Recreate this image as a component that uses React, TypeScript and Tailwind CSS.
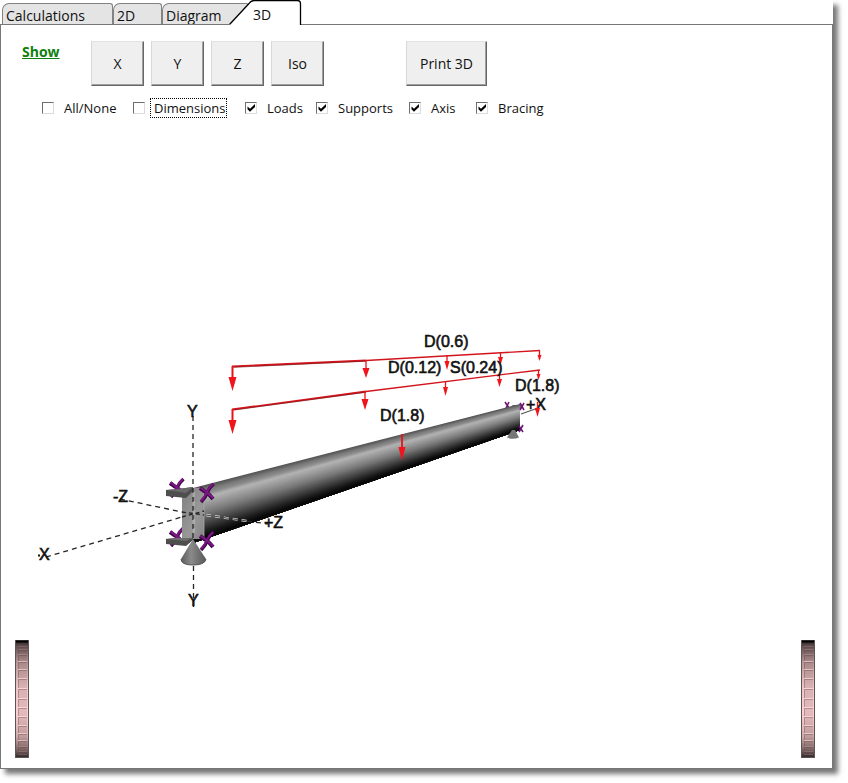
import React from "react";

const ui = "font-['Open_Sans','Noto_Sans',sans-serif]";

function PlainTab({ label, width }: { label: string; width: string }) {
  return (
    <button
      type="button"
      role="tab"
      aria-selected={false}
      className={`${width} flex h-[22px] shrink-0 items-end whitespace-nowrap rounded-tl-[7px] rounded-tr-[3px] border border-b-0 border-[#828282] bg-[#e4e4e4] pl-[3px] text-left text-sm leading-[18px] text-[#111]`}
    >
      {label}
    </button>
  );
}

function ActiveTab({ label }: { label: string }) {
  return (
    <button
      type="button"
      role="tab"
      aria-selected={true}
      className="relative z-10 -ml-5 h-[25px] w-[73px] shrink-0 pl-6 pt-1 text-left text-sm leading-5 text-[#111]"
    >
      <svg className="absolute inset-0" width="73" height="25" viewBox="0 0 73 25" aria-hidden="true">
        <path d="M0 24.5 L20 3.5 L24 0.5 H69 L71.5 3 V24.5 V25 H0Z" fill="#fff" />
        <path d="M0.5 24.5 L20 3.5 Q22 .5 25 .5 H68.500 Q71.500 .5 71.500 4 V25" fill="none" stroke="#000" strokeWidth="1.3" />
      </svg>
      <span className="relative">{label}</span>
    </button>
  );
}

function ViewButton({ label, width }: { label: string; width: string }) {
  return (
    <button
      type="button"
      className={`${width} h-[45px] border border-[#666] border-l-[#d8d8d8] border-t-[#e2e2e2] bg-[#efefef] text-sm text-[#111] shadow-[inset_-1px_-1px_0_#a0a0a0]`}
    >
      {label}
    </button>
  );
}

function Option({
  id,
  label,
  width,
  checked = false,
  focused = false,
}: {
  id: string;
  label: string;
  width: string;
  checked?: boolean;
  focused?: boolean;
}) {
  return (
    <div className={`${width} flex h-5 shrink-0 items-center`}>
      <span className="relative block h-3 w-3 shrink-0">
        <input
          id={id}
          type="checkbox"
          defaultChecked={checked}
          className="peer block h-3 w-3 appearance-none border border-b-[#dcdcdc] border-l-[#6e6e6e] border-r-[#dcdcdc] border-t-[#6e6e6e] bg-white"
        />
        <svg
          className="pointer-events-none absolute inset-0 hidden peer-checked:block"
          width="12"
          height="12"
          viewBox="0 0 12 12"
          aria-hidden="true"
        >
          <path d="M2.500 4.500V7.300L5 9.700L10 4.900V2L5 6.700Z" fill="#000" />
        </svg>
      </span>
      <label
        htmlFor={id}
        className={`${
          focused ? "ml-[5px] border-black pl-[3px]" : "ml-[9px] border-transparent"
        } whitespace-nowrap border border-dotted text-[13px] leading-[18px] text-[#111]`}
      >
        {label}
      </label>
    </div>
  );
}

const teeth = [4, 7, 10, 15, 22, 30, 39, 49, 59, 68, 77, 86, 94, 101, 107, 112, 115];

function Wheel({ id, label }: { id: string; label: string }) {
  return (
    <div className="relative h-[118px] w-[14px]">
      <svg width="14" height="118" viewBox="0 0 14 118" aria-hidden="true">
        <defs>
          <linearGradient id={`${id}-body`} x1="0" y1="0" x2="0" y2="1">
            <stop offset="0" stopColor="#1c1616" />
            <stop offset="0.05" stopColor="#5e4d4d" />
            <stop offset="0.18" stopColor="#b49393" />
            <stop offset="0.4" stopColor="#eec6c8" />
            <stop offset="0.62" stopColor="#fbd0d3" />
            <stop offset="0.82" stopColor="#cfabac" />
            <stop offset="0.94" stopColor="#765f5e" />
            <stop offset="1" stopColor="#2b2222" />
          </linearGradient>
        </defs>
        <rect width="14" height="118" fill={`url(#${id}-body)`} />
        {teeth.slice(0, -1).map((y, i) => (
          <g key={y}>
            <rect x="3" y={y} width="9" height={teeth[i + 1] - y - 1} fill="#70484c" fillOpacity="0.16" />
            <path d={`M3.500 ${teeth[i + 1] - 1}V${y + 0.5}H12`} fill="none" stroke="#5b4044" strokeOpacity="0.35" />
            <path d={`M3 ${teeth[i + 1] - 0.5}H12`} stroke="#ffe0e2" strokeOpacity={y < 12 || y > 100 ? 0.15 : 0.5} />
          </g>
        ))}
        <rect x="0.5" y="0.5" width="13" height="117" fill="none" stroke="#5c5352" />
        <path d="M1 1.500H13" stroke="#000" strokeWidth="2" />
      </svg>
      <input
        type="range"
        aria-label={label}
        className="absolute inset-0 h-full w-full cursor-ns-resize opacity-0 [writing-mode:vertical-lr]"
      />
    </div>
  );
}

/* Grey level across the beam web, from the top edge (0) to the bottom edge (1). */
const shade: [number, number][] = [
  [0, 86],
  [0.08, 122],
  [0.15, 140],
  [0.22, 180],
  [0.3, 164],
  [0.5, 122],
  [0.7, 68],
  [0.86, 26],
  [0.95, 8],
  [1, 14],
];

function grey(t: number) {
  for (let i = 1; i < shade.length; i++) {
    const [t0, g0] = shade[i - 1];
    const [t1, g1] = shade[i];
    if (t <= t1) {
      const g = Math.round(g0 + ((g1 - g0) * (t - t0)) / (t1 - t0));
      return `rgb(${g},${g},${g})`;
    }
  }
  return "#000";
}

const STRIPS = 48;

function Beam() {
  return (
    <g>
      {Array.from({ length: STRIPS }, (_, i) => {
        const t = i / STRIPS;
        return (
          <polygon
            key={i}
            points={`193,${488 + 55 * t} 520,${404 + 26 * t} 520,430 193,543`}
            fill={grey(t)}
          />
        );
      })}
    </g>
  );
}

function Arrow({ x, y, tip, head, half, width = 1.3 }: { x: number; y: number; tip: number; head: number; half: number; width?: number }) {
  return (
    <g>
      <path d={`M${x} ${y}V${tip - head + 1}`} stroke="#e5141b" strokeWidth={width} />
      <path d={`M${x - half} ${tip - head}H${x + half}L${x} ${tip}Z`} fill="#f0141b" />
    </g>
  );
}

function Brace({ x, y }: { x: number; y: number }) {
  return (
    <g transform={`translate(${x} ${y})`} fill="none">
      <path d="M-7 -5L-2 -1.500L2 1.500L6 6" stroke="#3e0846" strokeWidth="4" />
      <path d="M6.500 -9Q2 -5 0.500 -1Q-1 4 -6 9" stroke="#3e0846" strokeWidth="3.500" />
      <path d="M-6.500 -5.500L-2 -2L2 1L6 5" stroke="#7d1787" strokeWidth="2.200" />
      <path d="M6 -9Q1.500 -5 0 -1Q-1.500 3 -6 8" stroke="#7d1787" strokeWidth="2" />
    </g>
  );
}

const labels: [string, number, number][] = [
  ["D(0.6)", 424, 347],
  ["D(0.12)", 388, 373],
  ["S(0.24)", 450, 373],
  ["D(1.8)", 515, 391],
  ["D(1.8)", 380, 421],
  ["Y", 187, 417],
  ["-Z", 113, 502],
  ["+Z", 264, 528],
  ["X", 39, 560],
  ["+X", 526, 410],
  ["Y", 188, 606],
];

function Scene() {
  return (
    <svg
      width="600"
      height="500"
      viewBox="1 118 600 500"
      className="block shrink-0"
      role="img"
      aria-label="Beam with loads, supports, axes and bracing"
    >
      <defs>
        <linearGradient id="cone" x1="0" x2="1">
          <stop offset="0" stopColor="#5d5d5d" />
          <stop offset="0.4" stopColor="#8a8a8a" />
          <stop offset="1" stopColor="#585858" />
        </linearGradient>
        <linearGradient id="plate" x1="0" x2="1" y1="0" y2="1">
          <stop offset="0" stopColor="#808080" />
          <stop offset="0.6" stopColor="#989898" />
          <stop offset="1" stopColor="#858585" />
        </linearGradient>
      </defs>

      {/* far end of the beam */}
      <path d="M505 402l4 6M509 402l-3 6" stroke="#6d1577" strokeWidth="1.600" fill="none" />
      <path d="M512 405H522V408H514Z" fill="#666" />

      <Brace x={177} y={488} />
      <Brace x={177} y={537} />
      <Beam />
      <path d="M512 430L515 430L519 437.500Q513 440 507 437.500Z" fill="#777" />
      <path
        d="M520 403l4 7M524 403l-4 7M519 426l4 6M523 425l-4 7"
        stroke="#6d1577"
        strokeWidth="1.600"
        fill="none"
      />
      <path d="M182 495L193 488H204V539H182Z" fill="url(#plate)" />
      <path d="M193 488V538M204 492V538" stroke="#a6a6a6" strokeWidth="0.800" />
      <path d="M166 490L178 489L193 487V491L186 498L166 496Z" fill="#4e4e4e" />
      <path d="M166 490L178 489L193 487L186 493Z" fill="#696969" />
      <path d="M166 539L176 538L193 538V540L186 546L166 544Z" fill="#4e4e4e" />
      <path d="M166 539L176 538L193 538L186 541Z" fill="#6d6d6d" />
      <Brace x={207} y={493} />
      <Brace x={207} y={541} />
      <path d="M193 539L181 559Q181 565 193 565T206 559Z" fill="url(#cone)" />
      <path d="M181 559Q181 565 193 565T206 559" fill="none" stroke="#555" />

      {/* axes */}
      <g fill="none" stroke="#252525" strokeWidth="1.300">
        <path d="M193 416V538M193.500 566V600" strokeDasharray="5 4" />
        <path d="M46 557L182 517M120 499L182 512" strokeDasharray="5 4" />
        <path d="M182 517L204 511M182 512L204 515" strokeDasharray="4 3" />
        <path d="M193.500 600V607" />
        <path d="M521 414L538 408" stroke="#555" />
        <path d="M247 521L268 524" strokeDasharray="5 4" />
      </g>
      <path d="M206 515L247 521" stroke="#d5d5d5" strokeWidth="2.400" strokeDasharray="5 4" />
      <path d="M206 515L247 521" stroke="#444" strokeWidth="1" strokeDasharray="5 4" />
      <path d="M194 492V536" stroke="#d2d2d2" strokeWidth="0.700" strokeDasharray="5 4" />
      <path d="M38 555.500h2" stroke="#111" strokeWidth="2" />

      {/* loads */}
      <g fill="none">
        <path d="M232 366.500L366 360.500" stroke="#d3141c" strokeWidth="1.800" />
        <path d="M366 360.500L540 350.500" stroke="#d3141c" strokeWidth="1.300" />
        <path d="M232 409.500L366 391.500" stroke="#d3141c" strokeWidth="1.800" />
        <path d="M366 391.500L540 370" stroke="#d3141c" strokeWidth="1.300" />
        <path d="M234 367.300L366 361.200M234 410L366 392.300" stroke="#701318" strokeWidth="0.600" />
      </g>
      <Arrow x={232.500} y={366} tip={391} head={14} half={4} width={2} />
      <Arrow x={366} y={360} tip={378} head={10} half={3.500} />
      <Arrow x={447} y={355} tip={370} head={9} half={2.500} />
      <Arrow x={500.500} y={353} tip={365} head={8} half={2.500} />
      <Arrow x={539.500} y={350} tip={361} head={6} half={2} />
      <Arrow x={232.500} y={409} tip={434} head={14} half={4} width={2} />
      <Arrow x={365} y={391} tip={410} head={11} half={3.500} />
      <Arrow x={445.500} y={381} tip={396} head={9} half={2.500} />
      <Arrow x={499.500} y={374} tip={387} head={8} half={2.500} />
      <Arrow x={538.500} y={370} tip={380} head={6} half={2} />
      <Arrow x={402} y={434} tip={461} head={14} half={3.500} width={1.800} />

      <g
        className="font-['Liberation_Sans',Arial,sans-serif]"
        fontSize="16"
        fill="#111"
        stroke="#111"
        strokeWidth="0.600"
      >
        {labels.map(([text, x, y]) => (
          <text key={`${text}-${x}`} x={x} y={y}>
            {text}
          </text>
        ))}
      </g>
      <Arrow x={537.500} y={402} tip={417} head={9} half={2.500} />
    </svg>
  );
}

export default function App() {
  return (
    <div className={`${ui} flex min-h-screen flex-col bg-white pb-[14px] pr-[15px]`}>
      <main className="flex flex-1 flex-col bg-white shadow-[5px_5px_5px_#777]">
        <div role="tablist" className="flex h-[25px] items-end pl-[2px]">
          <PlainTab label="Calculations" width="w-[111px]" />
          <PlainTab label="2D" width="w-[49px]" />
          <PlainTab label="Diagram" width="w-[87px]" />
          <ActiveTab label="3D" />
        </div>
        <section className="-mt-px flex flex-1 flex-col border border-[#777]">
          <div className="flex pl-[21px] pt-4">
            <a href="#show" className="w-[69px] text-sm font-bold leading-[22px] text-[#108010] underline">
              Show
            </a>
            <div className="flex gap-[7px]">
              <ViewButton label="X" width="w-[53px]" />
              <ViewButton label="Y" width="w-[53px]" />
              <ViewButton label="Z" width="w-[53px]" />
              <ViewButton label="Iso" width="w-[53px]" />
            </div>
            <div className="ml-[82px] flex">
              <ViewButton label="Print 3D" width="w-[81px]" />
            </div>
          </div>
          <div className="flex pl-[41px] pt-3">
            <Option id="all" label="All/None" width="w-[91px]" />
            <Option id="dimensions" label="Dimensions" width="w-[112px]" focused />
            <Option id="loads" label="Loads" width="w-[71px]" checked />
            <Option id="supports" label="Supports" width="w-[93px]" checked />
            <Option id="axis" label="Axis" width="w-[67px]" checked />
            <Option id="bracing" label="Bracing" width="w-[80px]" checked />
          </div>
          <Scene />
          <div className="mt-auto flex justify-between pb-[10px] pl-[14px] pr-[17px]">
            <Wheel id="left-wheel" label="Tilt view" />
            <Wheel id="right-wheel" label="Zoom view" />
          </div>
        </section>
      </main>
    </div>
  );
}
